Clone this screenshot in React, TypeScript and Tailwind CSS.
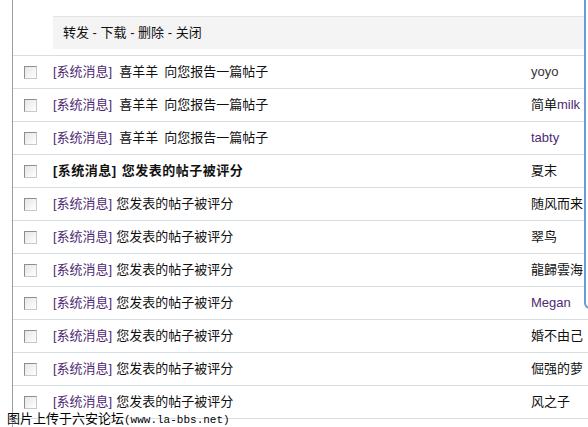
import React from "react";

type Row = {
  title: React.ReactNode;
  bold?: boolean;
  name: React.ReactNode;
};

const purple = "text-[#4e2a72]";

const reported = (
  <>
    <span className="ml-[7px]">喜羊羊</span>
    <span className="ml-[6px]">向您报告一篇帖子</span>
  </>
);

const rated = <span className="ml-[4px]">您发表的帖子被评分</span>;

const rows: Row[] = [
  { title: reported, name: <span className="text-[#333333]">yoyo</span> },
  {
    title: reported,
    name: (
      <>
        简单<span className={purple}>milk</span>
      </>
    ),
  },
  { title: reported, name: <span className={purple}>tabty</span> },
  { title: <span className="ml-[5px]">您发表的帖子被评分</span>, bold: true, name: "夏末" },
  { title: rated, name: "随风而来" },
  { title: rated, name: "翠鸟" },
  { title: rated, name: "龍歸雲海" },
  { title: rated, name: <span className={purple}>Megan</span> },
  { title: rated, name: "婚不由己" },
  { title: rated, name: "倔强的萝" },
  { title: rated, name: "风之子" },
];

const Checkbox = () => (
  <span className="block w-[13px] h-[13px] border border-t-[#8e8e8e] border-l-[#8e8e8e] border-r-[#c8c8c8] border-b-[#c8c8c8] bg-gradient-to-br from-[#e6e6e6] to-white" />
);

export default function App() {
  return (
    <div
      className="relative w-[588px] h-[427px] overflow-hidden bg-white text-[13px] text-[#111111]"
      style={{ fontFamily: '"Liberation Sans", "Noto Sans CJK SC", sans-serif' }}
    >
      <div className="ml-[12px] h-full border-l border-[#9e9e9e]">
        {/* toolbar */}
        <div className="pt-[16px] pb-[6px] pl-[40px] border-b border-[#d3dde4]">
          <div className="h-[33px] flex items-center pl-[10px] bg-[#f4f4f4] border-t border-[#e4e4e4]">
            转发 - 下载 - 删除 - 关闭
          </div>
        </div>

        {/* message rows */}
        {rows.map((r, i) => (
          <div
            key={i}
            className="h-[33px] flex items-center border-b border-[#d3dde4]"
          >
            <div className="w-[40px] pl-[11px] shrink-0">
              <Checkbox />
            </div>
            <div className={`w-[478px] shrink-0 ${r.bold ? "font-bold tracking-[0.5px]" : ""}`}>
              <span className={r.bold ? "" : purple}>[系统消息]</span>
              {r.title}
            </div>
            <div className="whitespace-nowrap">{r.name}</div>
          </div>
        ))}
        <div className="h-[33px] border-b border-[#d3dde4]" />
      </div>

      {/* edge of the neighbouring window */}
      <div className="absolute left-[584px] top-[-4px] w-[8px] h-[313px] border-l-2 border-b-2 border-[#6b9bd2] rounded-bl-[6px] bg-white" />

      {/* forum watermark */}
      <div
        className="absolute left-[7px] top-[408px] whitespace-nowrap text-black text-[13px] [text-shadow:0_0_2px_#fff,0_0_1px_#fff]"
        style={{ fontFamily: '"Noto Sans CJK SC", sans-serif' }}
      >
        图片上传于六安论坛
        <span className="text-[11px]" style={{ fontFamily: '"Liberation Mono", monospace' }}>
          (www.la-bbs.net)
        </span>
      </div>
    </div>
  );
}
